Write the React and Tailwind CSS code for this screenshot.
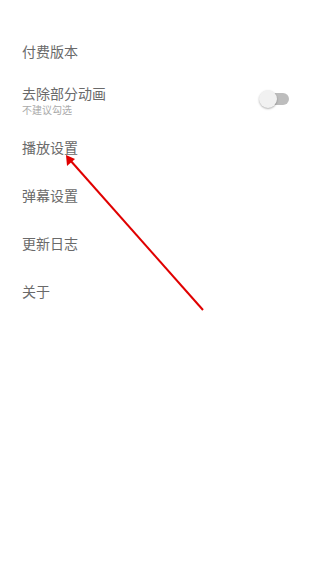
export default function App() {
  const font = { fontFamily: '"Noto Sans CJK SC", "Noto Sans", sans-serif' };
  return (
    <div className="relative w-[320px] h-[568px] bg-white overflow-hidden" style={font}>
      <div className="flex flex-col pt-[27px]">
        <div className="h-12 flex items-center px-[22px] text-[14px] leading-[20px] text-[#6a6a6a]">付费版本</div>
        <div className="h-12 flex items-center justify-between pl-[22px] pr-[31px]">
          <div className="flex flex-col">
            <span className="text-[14px] leading-[20px] text-[#6a6a6a]">去除部分动画</span>
            <span className="text-[10px] leading-[13px] text-[#aaa]">不建议勾选</span>
          </div>
          <div className="relative w-[30px] h-[20px] flex items-center">
            <div className="absolute left-[4px] right-0 h-[12px] rounded-full bg-[#bdbdbd]" />
            <div className="absolute left-0 w-[18px] h-[18px] rounded-full bg-[#f1f1f1] shadow-[0_1px_2px_rgba(0,0,0,0.3)]" />
          </div>
        </div>
        <div className="h-12 flex items-center px-[22px] text-[14px] leading-[20px] text-[#6a6a6a]">播放设置</div>
        <div className="h-12 flex items-center px-[22px] text-[14px] leading-[20px] text-[#6a6a6a]">弹幕设置</div>
        <div className="h-12 flex items-center px-[22px] text-[14px] leading-[20px] text-[#6a6a6a]">更新日志</div>
        <div className="h-12 flex items-center px-[22px] text-[14px] leading-[20px] text-[#6a6a6a]">关于</div>
      </div>
      <svg className="absolute left-0 top-0 pointer-events-none" width="320" height="568">
        <line x1="203" y1="310" x2="70" y2="160" stroke="#e00000" strokeWidth="2" />
        <polygon points="66,155 67,166 75,159" fill="#e00000" />
      </svg>
    </div>
  );
}
